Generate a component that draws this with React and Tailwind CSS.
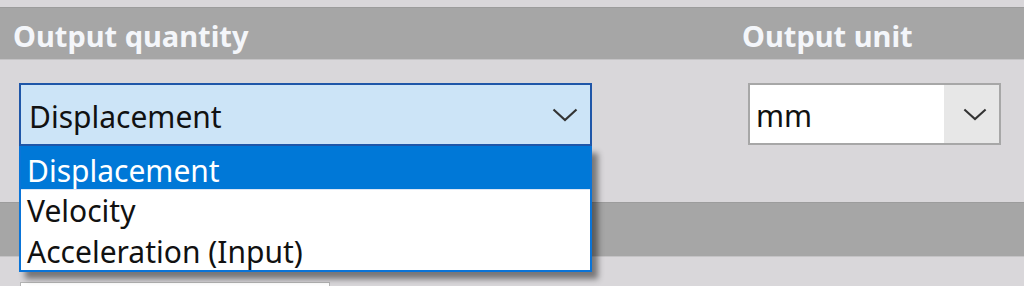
import React from "react";

const font = { fontFamily: '"Noto Sans", "Open Sans", sans-serif' };

function Chevron({ className }) {
  return (
    <svg viewBox="0 0 26 14" className={className} fill="none">
      <path d="M1.5 1.5 L13 12 L24.5 1.5" stroke="#333333" strokeWidth="2.2" />
    </svg>
  );
}

export default function App() {
  return (
    <div className="w-[1024px] h-[286px] overflow-hidden bg-[#d9d7da] flex flex-col" style={font}>
      <div className="h-[7px] shrink-0" />
      <div className="h-[53px] shrink-0 bg-[#a6a6a6] border-t border-[#9c9c9c] border-b border-b-[#c4c3c5] grid grid-cols-[742px_1fr] items-center text-[29px] font-bold text-[#f4f6fa] leading-none">
        <div className="pl-[13px] pt-[3px]">Output quantity</div>
        <div className="pt-[3px]">Output unit</div>
      </div>
      <div className="h-[142px] shrink-0 relative grid grid-cols-[748px_1fr] pt-[23px]">
        <div className="pl-[19px]">
          <div className="relative w-[573px]">
            <div className="h-[63px] border-2 border-[#1f56a8] bg-[#cce4f7] flex items-center justify-between pl-[8px] pr-[12px] text-[30px] text-[#111] leading-none">
              <span className="pt-[4px]">Displacement</span>
              <Chevron className="w-[26px] h-[14px]" />
            </div>
            <div className="absolute left-0 top-[63px] w-[573px] border-2 border-t-0 border-[#0a74d8] bg-white shadow-[6px_7px_6px_rgba(0,0,0,0.45)] text-[30px] leading-none z-10">
              <div className="h-[43px] bg-[#0078d7] text-white flex items-center pl-[6px]">
                <span className="pt-[6px]">Displacement</span>
              </div>
              <div className="h-[41px] text-[#111] flex items-center pl-[6px] border-t border-[#dbe6f5]">
                <span className="pt-[2px]">Velocity</span>
              </div>
              <div className="h-[40px] text-[#111] flex items-center pl-[6px]">
                <span className="pt-[3px]">Acceleration (Input)</span>
              </div>
            </div>
          </div>
        </div>
        <div>
          <div className="w-[253px] h-[62px] border-2 border-[#a7a7a7] bg-white flex">
            <div className="flex-1 flex items-center pl-[6px] text-[30px] text-[#111] leading-none">
              <span className="pt-[3px]">mm</span>
            </div>
            <div className="w-[55px] bg-[#e7e7e7] flex items-center justify-center pl-[6px]">
              <Chevron className="w-[24px] h-[13px]" />
            </div>
          </div>
        </div>
      </div>
      <div className="h-[55px] shrink-0 bg-[#a6a6a6] border-t border-[#9c9c9c] border-b border-b-[#c4c3c5]" />
      <div className="flex-1 pt-[25px] pl-[20px]">
        <div className="w-[310px] h-[20px] bg-white border border-[#b5b5b5]" />
      </div>
    </div>
  );
}
